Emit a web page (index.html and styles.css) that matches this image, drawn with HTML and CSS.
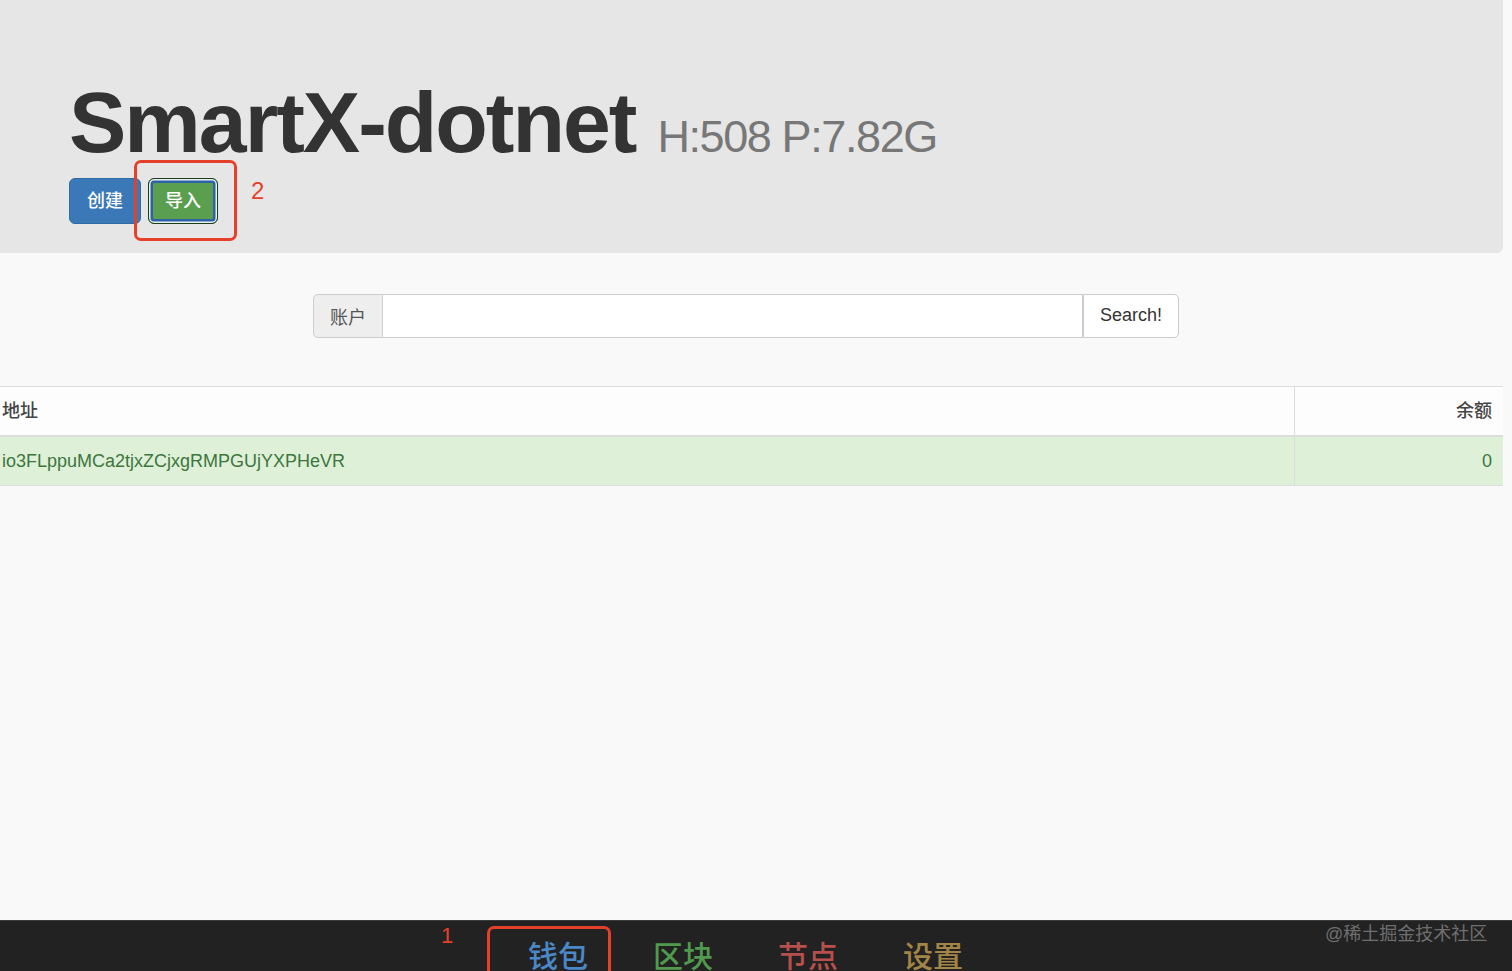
FILE: index.html
```html
<!DOCTYPE html>
<html lang="zh-CN">
<head>
    <meta charset="UTF-8">
    <meta name="viewport" content="width=device-width, initial-scale=1.0">
    <title>SmartX-dotnet</title>
    <link rel="stylesheet" href="styles.css">
</head>
<body>
    <div class="page">
        <div class="jumbotron">
            <h1>SmartX-dotnet <small>H:508 P:7.82G</small></h1>
            <div class="actions">
                <button class="btn btn-primary">创建</button>
                <button class="btn btn-success focused">导入</button>
            </div>
            <!-- annotation from the screenshot -->
            <div class="mark mark-import"></div>
            <span class="mark-num num-2">2</span>
        </div>

        <div class="search">
            <span class="addon">账户</span>
            <input class="search-input" type="text">
            <button class="search-btn">Search!</button>
        </div>

        <table class="wallets">
            <thead>
                <tr>
                    <th class="col-addr">地址</th>
                    <th class="col-bal">余额</th>
                </tr>
            </thead>
            <tbody>
                <tr class="success">
                    <td class="col-addr">io3FLppuMCa2tjxZCjxgRMPGUjYXPHeVR</td>
                    <td class="col-bal">0</td>
                </tr>
            </tbody>
        </table>
    </div>

    <nav class="navbar">
        <span class="mark-num num-1">1</span>
        <ul class="nav-items">
            <li class="nav-wallet active">钱包<div class="mark mark-nav"></div></li>
            <li class="nav-block">区块</li>
            <li class="nav-node">节点</li>
            <li class="nav-settings">设置</li>
        </ul>
        <span class="watermark">@稀土掘金技术社区</span>
    </nav>
</body>
</html>
```

FILE: styles.css
```css
html, body {
    margin: 0;
    padding: 0;
}

body {
    font-family: 'Liberation Sans', 'Noto Sans CJK SC', sans-serif;
    background: #f9f9f9;
    color: #333;
    height: 100vh;
    overflow: hidden;
    display: flex;
    flex-direction: column;
}

.page {
    flex: 1;
}

.jumbotron {
    position: relative;
    background: #e6e6e6;
    margin-right: 9px;
    border-radius: 0 0 6px 0;
    padding: 75px 0 29px 69px;
}

h1 {
    margin: 0;
    font-size: 86px;
    line-height: 1.1;
    font-weight: bold;
    letter-spacing: -2px;
    color: #333;
}

h1 small {
    font-size: 45px;
    font-weight: normal;
    color: #777;
    letter-spacing: -1.4px;
}

.actions {
    margin-top: 8px;
    display: flex;
    gap: 7px;
}

.btn {
    font-family: inherit;
    font-size: 18px;
    font-weight: 500;
    line-height: 24px;
    padding: 10px 17px;
    border: 1px solid transparent;
    border-radius: 6px;
    color: #fff;
    cursor: pointer;
}

.btn-primary {
    background: #3a78b8;
    border-color: #2e6da4;
}

.btn-success {
    background: #5a9e50;
    border-color: #1c3a1e;
}

.btn-success.focused {
    padding: 10px 16px;
    box-shadow: inset 0 0 0 1.5px #e9f2ef, inset 0 0 0 4px #2e62a8;
}

.mark {
    position: absolute;
    border: 3px solid #e5402a;
    border-radius: 7px;
    box-sizing: border-box;
}

.mark-import {
    left: 134px;
    top: 160px;
    width: 103px;
    height: 81px;
}

.mark-num {
    position: absolute;
    color: #e5402a;
    font-size: 24px;
    line-height: 1;
}

.num-2 {
    left: 251px;
    top: 179px;
}

.search {
    display: flex;
    width: 866px;
    height: 44px;
    margin: 41px 0 0 313px;
    font-size: 18px;
}

.addon {
    width: 70px;
    box-sizing: border-box;
    display: flex;
    align-items: center;
    justify-content: center;
    background: #eee;
    color: #555;
    border: 1px solid #ccc;
    border-radius: 5px 0 0 5px;
}

.search-input {
    flex: 1;
    border: 1px solid #ccc;
    border-left: none;
    background: #fff;
    margin: 0;
    padding: 0 12px;
    font-size: 18px;
}

.search-btn {
    width: 96px;
    background: #fff;
    border: 1px solid #ccc;
    border-radius: 0 5px 5px 0;
    font-family: inherit;
    font-size: 18px;
    color: #333;
    margin: 0;
}

.wallets {
    width: 1503px;
    margin-top: 48px;
    border-collapse: collapse;
    font-size: 18px;
}

.wallets th,
.wallets td {
    padding: 12px 11px 12px 2px;
    line-height: 24px;
    border-top: 1px solid #ddd;
}

.wallets th {
    background: #fdfdfd;
    font-weight: 500;
    color: #444;
    border-bottom: 2px solid #ddd;
}

.wallets td {
    border-top: none;
    border-bottom: 1px solid #ddd;
}

.col-addr {
    text-align: left;
}

.col-bal {
    width: 195px;
    text-align: right;
    border-left: 1px solid #ddd;
}

.wallets tr.success td {
    background: #dff0d8;
    color: #3c763d;
}

.navbar {
    position: relative;
    flex-shrink: 0;
    height: 50px;
    background: #222;
    border-top: 1px solid #3a3a3a;
    overflow: hidden;
}

.nav-items {
    list-style: none;
    margin: 0;
    padding: 21px 0 0 528px;
    display: flex;
    gap: 65px;
}

.nav-items li {
    position: relative;
    font-size: 30px;
    line-height: 30px;
    font-weight: 500;
}

.nav-wallet { color: #4a88c7; }
.nav-block { color: #4f9a4e; }
.nav-node { color: #b5504c; }
.nav-settings { color: #a48548; }

.mark-nav {
    left: -41px;
    top: -16px;
    width: 124px;
    height: 70px;
}

.num-1 {
    left: 441px;
    top: 4px;
    font-size: 22px;
}

.watermark {
    position: absolute;
    left: 1325px;
    top: -2px;
    font-size: 18px;
    color: #6f6f6f;
}
```
